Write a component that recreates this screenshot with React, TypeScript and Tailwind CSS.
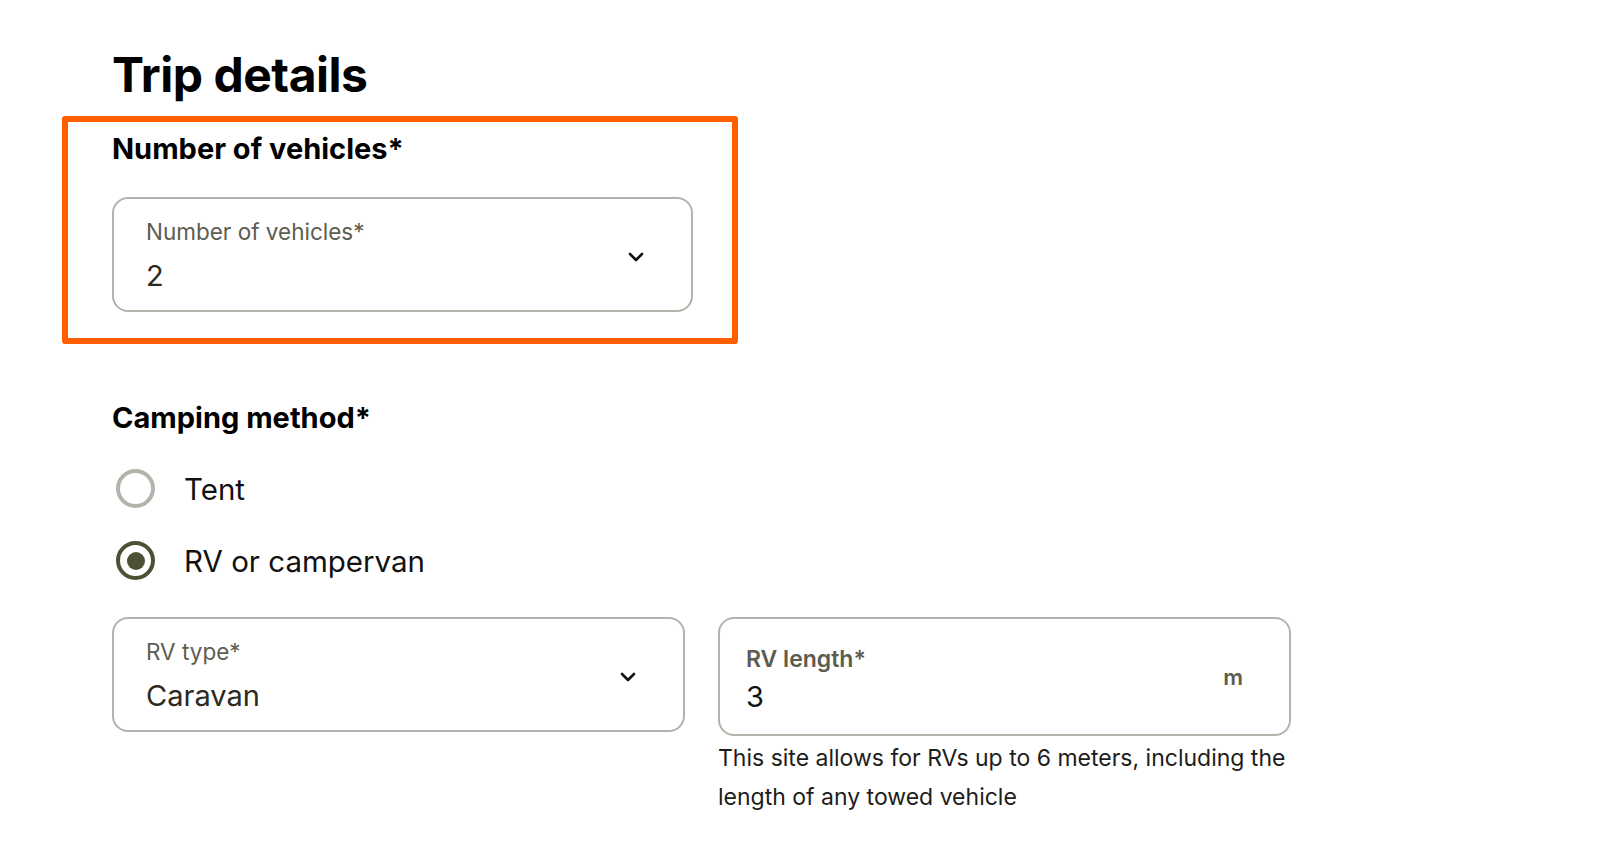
import { useState } from "react";

type SelectFieldProps = {
  label: string;
  value: string;
  className?: string;
};

function Chevron() {
  return (
    <svg width="16" height="10" viewBox="0 0 16 10" fill="none" className="mt-[5px] shrink-0 text-[#111]">
      <path
        d="M2 2l6 6 6-6"
        stroke="currentColor"
        strokeWidth="2.6"
        strokeLinecap="round"
        strokeLinejoin="round"
      />
    </svg>
  );
}

function SelectField({ label, value, className = "" }: SelectFieldProps) {
  return (
    <div
      className={`flex h-[115px] items-center justify-between rounded-[16px] border-2 border-[#b4b3ab] bg-white pl-[32px] pr-[47px] ${className}`}
    >
      <div className="flex flex-col self-start pt-[19px]">
        <span className="text-[22.5px] leading-[27px] text-[#5d5c50]">{label}</span>
        <span className="mt-[13px] text-[29px] leading-[35px] text-[#2a2a20]">{value}</span>
      </div>
      <Chevron />
    </div>
  );
}

function Radio({ checked, label, onSelect }: { checked: boolean; label: string; onSelect: () => void }) {
  return (
    <button type="button" onClick={onSelect} className="ml-[4px] flex h-[39px] items-center gap-[29px] text-left">
      <span
        className={`flex h-[39px] w-[39px] items-center justify-center rounded-full border-4 ${
          checked ? "border-[#4b5234]" : "border-[#b4b3ab]"
        }`}
      >
        {checked && <span className="h-[18px] w-[18px] rounded-full bg-[#4b5234]" />}
      </span>
      <span className="text-[29.5px] leading-[36px] text-[#111]">{label}</span>
    </button>
  );
}

export default function App() {
  const [method, setMethod] = useState<"tent" | "rv">("rv");

  return (
    <div className="min-h-screen bg-white font-['Inter','Liberation_Sans',sans-serif] text-black">
      <div className="pl-[62px] pt-[47px]">
        <h1 className="pl-[50px] text-[48px] font-bold leading-[56px] tracking-[-0.01em]">Trip details</h1>

        {/* highlighted vehicles block */}
        <section className="mt-[13px] w-[676px] rounded-[3px] border-[6px] border-[#ff5f00] pb-[26px] pl-[44px] pt-[10px]">
          <h2 className="text-[29px] font-bold leading-[34px]">Number of vehicles*</h2>
          <SelectField className="mt-[31px] w-[581px]" label="Number of vehicles*" value="2" />
        </section>

        <div className="pl-[50px]">
          <h2 className="mt-[57px] text-[29px] font-bold leading-[34px]">Camping method*</h2>

          <div className="mt-[34px] flex flex-col items-start gap-[33px]">
            <Radio checked={method === "tent"} label="Tent" onSelect={() => setMethod("tent")} />
            <Radio checked={method === "rv"} label="RV or campervan" onSelect={() => setMethod("rv")} />
          </div>

          <div className="mt-[37px] grid w-[1179px] grid-cols-2 items-start gap-x-[33px]">
            <SelectField label="RV type*" value="Caravan" />

            <div>
              <div className="flex h-[119px] items-center justify-between rounded-[16px] border-2 border-[#b4b3ab] bg-white pl-[26px] pr-[46px]">
                <div className="flex flex-col self-start pt-[27px]">
                  <span className="text-[23px] font-semibold leading-[27px] text-[#5d5c50]">RV length*</span>
                  <span className="mt-[6px] text-[29px] leading-[35px] text-[#111]">3</span>
                </div>
                <span className="text-[22px] font-semibold leading-[26px] text-[#5d5c50]">m</span>
              </div>
              <p className="mt-[3px] text-[23px] leading-[39px] text-[#1d1d1b]">
                This site allows for RVs up to 6 meters, including the
                <br />
                length of any towed vehicle
              </p>
            </div>
          </div>
        </div>
      </div>
    </div>
  );
}
